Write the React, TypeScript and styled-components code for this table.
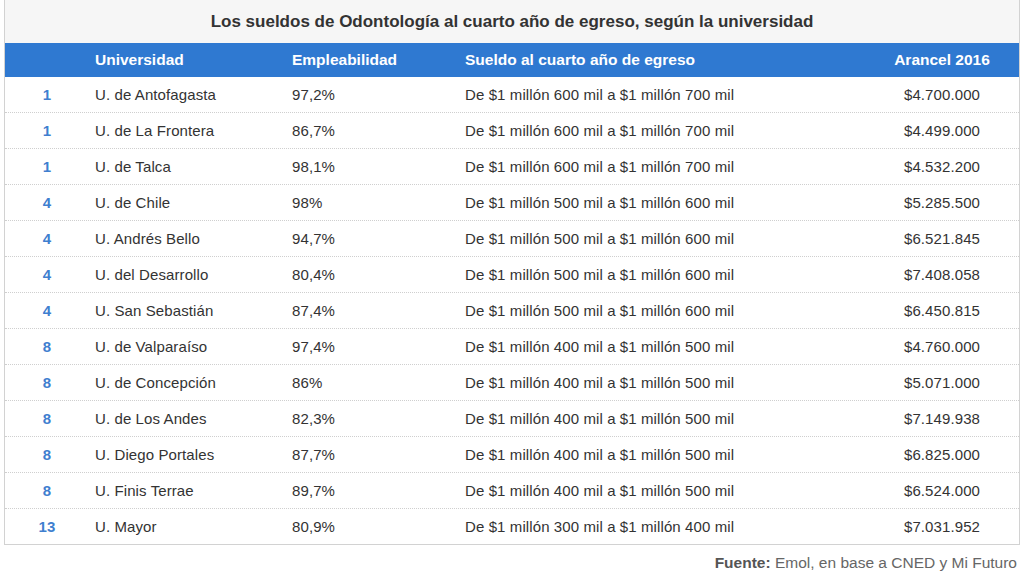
import styled, { createGlobalStyle } from 'styled-components';

const GlobalStyle = createGlobalStyle`
  html, body {
    margin: 0;
    padding: 0;
    background: #ffffff;
    font-family: 'Liberation Sans', Arial, sans-serif;
  }
`;

interface Row {
  rank: number;
  name: string;
  employ: string;
  salary: string;
  fee: string;
}

const rows: Row[] = [
  { rank: 1, name: 'U. de Antofagasta', employ: '97,2%', salary: 'De $1 millón 600 mil a $1 millón 700 mil', fee: '$4.700.000' },
  { rank: 1, name: 'U. de La Frontera', employ: '86,7%', salary: 'De $1 millón 600 mil a $1 millón 700 mil', fee: '$4.499.000' },
  { rank: 1, name: 'U. de Talca', employ: '98,1%', salary: 'De $1 millón 600 mil a $1 millón 700 mil', fee: '$4.532.200' },
  { rank: 4, name: 'U. de Chile', employ: '98%', salary: 'De $1 millón 500 mil a $1 millón 600 mil', fee: '$5.285.500' },
  { rank: 4, name: 'U. Andrés Bello', employ: '94,7%', salary: 'De $1 millón 500 mil a $1 millón 600 mil', fee: '$6.521.845' },
  { rank: 4, name: 'U. del Desarrollo', employ: '80,4%', salary: 'De $1 millón 500 mil a $1 millón 600 mil', fee: '$7.408.058' },
  { rank: 4, name: 'U. San Sebastián', employ: '87,4%', salary: 'De $1 millón 500 mil a $1 millón 600 mil', fee: '$6.450.815' },
  { rank: 8, name: 'U. de Valparaíso', employ: '97,4%', salary: 'De $1 millón 400 mil a $1 millón 500 mil', fee: '$4.760.000' },
  { rank: 8, name: 'U. de Concepción', employ: '86%', salary: 'De $1 millón 400 mil a $1 millón 500 mil', fee: '$5.071.000' },
  { rank: 8, name: 'U. de Los Andes', employ: '82,3%', salary: 'De $1 millón 400 mil a $1 millón 500 mil', fee: '$7.149.938' },
  { rank: 8, name: 'U. Diego Portales', employ: '87,7%', salary: 'De $1 millón 400 mil a $1 millón 500 mil', fee: '$6.825.000' },
  { rank: 8, name: 'U. Finis Terrae', employ: '89,7%', salary: 'De $1 millón 400 mil a $1 millón 500 mil', fee: '$6.524.000' },
  { rank: 13, name: 'U. Mayor', employ: '80,9%', salary: 'De $1 millón 300 mil a $1 millón 400 mil', fee: '$7.031.952' },
];

export default function App() {
  return (
    <>
      <GlobalStyle />
      <Page>
        <TableBox>
          <Title>Los sueldos de Odontología al cuarto año de egreso, según la universidad</Title>
          <HeaderRow>
            <Cell />
            <Cell>Universidad</Cell>
            <Cell>Empleabilidad</Cell>
            <Cell>Sueldo al cuarto año de egreso</Cell>
            <FeeCell>Arancel 2016</FeeCell>
          </HeaderRow>
          {rows.map((r, i) => (
            <BodyRow key={i} $last={i === rows.length - 1}>
              <RankCell>{r.rank}</RankCell>
              <Cell>{r.name}</Cell>
              <Cell>{r.employ}</Cell>
              <Cell>{r.salary}</Cell>
              <FeeCell>{r.fee}</FeeCell>
            </BodyRow>
          ))}
        </TableBox>
        <Source>
          <strong>Fuente:</strong> Emol, en base a CNED y Mi Futuro
        </Source>
      </Page>
    </>
  );
}

const Page = styled.div`
  width: 1024px;
  padding: 0 4px 0 4px;
  box-sizing: border-box;
`;

const TableBox = styled.div`
  border: 1px solid #d2d2d2;
  border-top: none;
  background: #ffffff;
`;

const Title = styled.div`
  height: 43px;
  display: flex;
  align-items: center;
  justify-content: center;
  background: #f6f6f6;
  color: #333333;
  font-size: 17px;
  font-weight: bold;
`;

const grid = `
  display: grid;
  grid-template-columns: 84px 197px 173px 413px 1fr;
  align-items: center;
`;

const HeaderRow = styled.div`
  ${grid}
  height: 34px;
  background: #2f79d1;
  color: #ffffff;
  font-size: 15.5px;
  font-weight: bold;
`;

const BodyRow = styled.div<{ $last: boolean }>`
  ${grid}
  height: 35px;
  color: #333333;
  font-size: 15px;
  letter-spacing: 0.1px;
  border-bottom: ${p => (p.$last ? 'none' : '1px dotted #cfcfcf')};
`;

const Cell = styled.div`
  padding-left: 6px;
  white-space: nowrap;
`;

const RankCell = styled.div`
  text-align: center;
  color: #3f7fcf;
  font-weight: bold;
`;

const FeeCell = styled.div`
  text-align: center;
  padding-right: 7px;
  white-space: nowrap;
`;

const Source = styled.div`
  text-align: right;
  padding: 9px 3px 0 0;
  color: #666666;
  font-size: 15.5px;

  strong {
    color: #555555;
  }
`;
